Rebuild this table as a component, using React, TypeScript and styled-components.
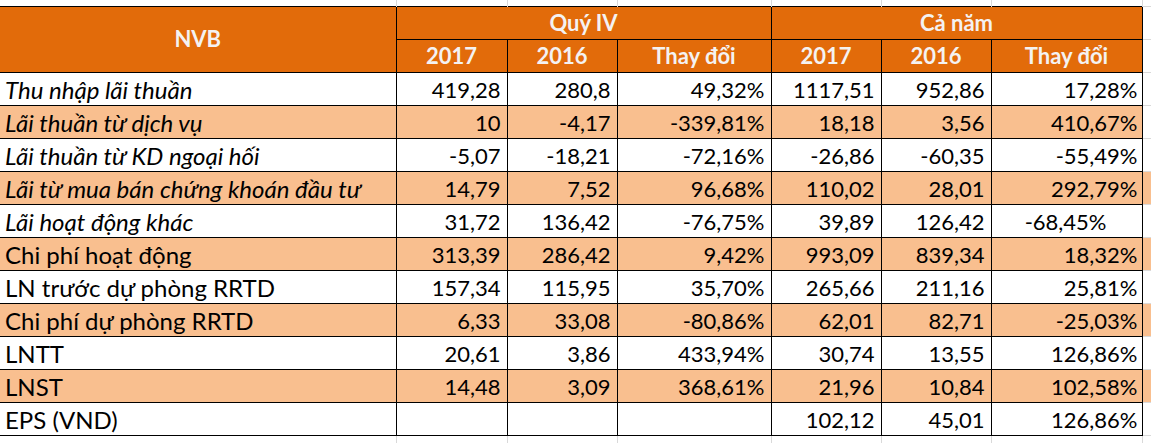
import React from "react";
import styled, { createGlobalStyle } from "styled-components";

const GlobalStyle = createGlobalStyle`
  html, body {
    margin: 0;
    padding: 0;
    background: #ffffff;
  }
  body {
    font-family: Lato, "Open Sans", "Liberation Sans", sans-serif;
  }
`;

const ORANGE = "#e26b0a";
const PEACH = "#f9bf8f";
const GRID = "#d9d9d9";
const LINE = "#000000";

type Row = {
  label: string;
  italic?: boolean;
  q: [string, string, string];
  y: [string, string, string];
  offsetLast?: boolean;
};

const rows: Row[] = [
  { label: "Thu nhập lãi thuần", italic: true, q: ["419,28", "280,8", "49,32%"], y: ["1117,51", "952,86", "17,28%"] },
  { label: "Lãi thuần từ dịch vụ", italic: true, q: ["10", "-4,17", "-339,81%"], y: ["18,18", "3,56", "410,67%"] },
  { label: "Lãi thuần từ KD ngoại hối", italic: true, q: ["-5,07", "-18,21", "-72,16%"], y: ["-26,86", "-60,35", "-55,49%"] },
  { label: "Lãi từ mua bán chứng khoán đầu tư", italic: true, q: ["14,79", "7,52", "96,68%"], y: ["110,02", "28,01", "292,79%"] },
  { label: "Lãi hoạt động khác", italic: true, q: ["31,72", "136,42", "-76,75%"], y: ["39,89", "126,42", "-68,45%"], offsetLast: true },
  { label: "Chi phí hoạt động", q: ["313,39", "286,42", "9,42%"], y: ["993,09", "839,34", "18,32%"] },
  { label: "LN trước dự phòng RRTD", q: ["157,34", "115,95", "35,70%"], y: ["265,66", "211,16", "25,81%"] },
  { label: "Chi phí dự phòng RRTD", q: ["6,33", "33,08", "-80,86%"], y: ["62,01", "82,71", "-25,03%"] },
  { label: "LNTT", q: ["20,61", "3,86", "433,94%"], y: ["30,74", "13,55", "126,86%"] },
  { label: "LNST", q: ["14,48", "3,09", "368,61%"], y: ["21,96", "10,84", "102,58%"] },
  { label: "EPS (VND)", q: ["", "", ""], y: ["102,12", "45,01", "126,86%"] },
];

// rows whose fill runs past the table edge, as in the sheet
const overflowFill = new Set([3, 5, 7, 9]);

const Sheet = styled.div`
  width: 1151px;
  height: 443px;
  overflow: hidden;
  background: #ffffff;
`;

const Table = styled.table`
  border-collapse: collapse;
  table-layout: fixed;
  width: 1151px;
  font-size: 22px;
  color: #000;
`;

const GridRow = styled.tr<{ $h: number }>`
  height: ${({ $h }) => $h}px;
`;

const GridCell = styled.td`
  padding: 0;
  border-right: 1px solid ${GRID};
`;

const HeadCell = styled.th`
  padding: 0;
  height: 32px;
  background: ${ORANGE};
  color: #f4f2f2;
  font-weight: 700;
  text-align: center;
  vertical-align: middle;
  border: 1px solid ${LINE};
  line-height: 1;
`;

const BodyRow = styled.tr<{ $shaded: boolean }>`
  height: 33px;
  background: ${({ $shaded }) => ($shaded ? PEACH : "#ffffff")};
`;

const LabelCell = styled.td<{ $italic?: boolean }>`
  padding: 2px 0 0 5px;
  border: 1px solid ${LINE};
  border-left: none;
  font-size: 24px;
  font-style: ${({ $italic }) => ($italic ? "italic" : "normal")};
  white-space: nowrap;
  vertical-align: middle;
  line-height: 1;
`;

const NumCell = styled.td<{ $pad?: number }>`
  padding: 2px ${({ $pad }) => $pad ?? 6}px 0 0;
  border: 1px solid ${LINE};
  text-align: right;
  white-space: nowrap;
  vertical-align: middle;
  line-height: 1;
`;

const EdgeCell = styled.td<{ $fill: boolean }>`
  padding: 0;
  background: ${({ $fill }) => ($fill ? PEACH : "#ffffff")};
  border-top: 1px solid ${GRID};
  border-bottom: 1px solid ${GRID};
`;

const widths = [396, 111, 110, 154, 110, 110, 151, 9];

export default function App() {
  return (
    <Sheet>
      <GlobalStyle />
      <Table>
        <colgroup>
          {widths.map((w, i) => (
            <col key={i} style={{ width: w }} />
          ))}
        </colgroup>
        <tbody>
          <GridRow $h={6}>
            {widths.map((_, i) => (
              <GridCell key={i} />
            ))}
          </GridRow>
          <tr>
            <HeadCell rowSpan={2} style={{ borderLeft: "none" }}>NVB</HeadCell>
            <HeadCell colSpan={3}>Quý IV</HeadCell>
            <HeadCell colSpan={3}>Cả năm</HeadCell>
            <EdgeCell $fill={false} />
          </tr>
          <tr>
            <HeadCell>2017</HeadCell>
            <HeadCell>2016</HeadCell>
            <HeadCell>Thay đổi</HeadCell>
            <HeadCell>2017</HeadCell>
            <HeadCell>2016</HeadCell>
            <HeadCell>Thay đổi</HeadCell>
            <EdgeCell $fill={false} />
          </tr>
          {rows.map((r, i) => (
            <BodyRow key={r.label} $shaded={i % 2 === 1}>
              <LabelCell $italic={r.italic}>{r.label}</LabelCell>
              <NumCell>{r.q[0]}</NumCell>
              <NumCell>{r.q[1]}</NumCell>
              <NumCell>{r.q[2]}</NumCell>
              <NumCell>{r.y[0]}</NumCell>
              <NumCell>{r.y[1]}</NumCell>
              <NumCell $pad={r.offsetLast ? 35 : 4}>{r.y[2]}</NumCell>
              <EdgeCell $fill={overflowFill.has(i)} />
            </BodyRow>
          ))}
          <GridRow $h={8}>
            {widths.map((_, i) => (
              <GridCell key={i} />
            ))}
          </GridRow>
        </tbody>
      </Table>
    </Sheet>
  );
}
